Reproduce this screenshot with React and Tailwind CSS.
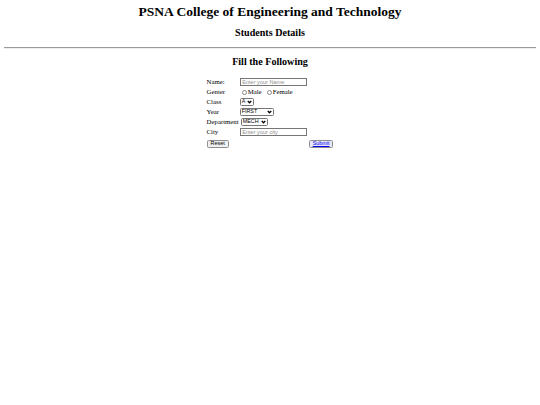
import React from 'react'

const serif = { fontFamily: '"Liberation Serif", "Times New Roman", serif' }

const Chevron = () => (
  <svg className="w-[5px] h-[4px] shrink-0" viewBox="0 0 10 8" fill="none" stroke="currentColor" strokeWidth={2.6}>
    <path d="M1.5 2l3.5 3.5L8.5 2" />
  </svg>
)

const FakeSelect = ({ value, width }) => (
  <div
    className={`flex items-center justify-between gap-[1px] h-[8px] px-[1px] border border-[#767676] rounded-[1.5px] bg-white text-[5.4px] text-black font-['Liberation_Sans',Arial,sans-serif] leading-none ${width}`}
  >
    <span>{value}</span>
    <Chevron />
  </div>
)

const TextBox = ({ placeholder }) => (
  <input
    type="text"
    placeholder={placeholder}
    className="w-[67px] h-[8px] px-[1.5px] border border-[#767676] bg-white text-[5.6px] leading-none font-['Liberation_Sans',Arial,sans-serif] placeholder:text-[#8f8f8f] outline-none"
  />
)

const Radio = ({ label }) => (
  <label className="flex items-center gap-[1px]">
    <span className="w-[5px] h-[5px] rounded-full border border-[#8a8a8a] bg-white" />
    <span>{label}</span>
  </label>
)

export default function App() {
  return (
    <div className="w-[540px] h-[405px] bg-white text-[#000000]" style={serif}>
      <div className="px-[4px]">
        <h1 className="pt-[4px] text-center text-[13.5px] font-bold leading-[16px]">
          PSNA College of Engineering and Technology
        </h1>
        <h2 className="mt-[7px] text-center text-[10.1px] font-bold leading-[12px]">Students Details</h2>
        <div className="mt-[8px] h-[2px] border-t border-[#9a9a9a] border-b border-b-[#eeeeee]" />
        <h2 className="mt-[7px] text-center text-[10.1px] font-bold leading-[12px]">Fill the Following</h2>

        <div className="mt-[9px] flex justify-center">
          <div className="grid grid-cols-[auto_auto_auto] gap-x-[1px] text-[6.8px] leading-[10px] text-black">
            <div className="w-[32px]">Name:</div>
            <div className="flex items-center"><TextBox placeholder="Enter your Name" /></div>
            <div />

            <div>Genter</div>
            <div className="flex items-center gap-[5px] pl-[2px]">
              <Radio label="Male" />
              <Radio label="Female" />
            </div>
            <div />

            <div>Class</div>
            <div className="flex items-center"><FakeSelect value="A" width="w-[14px]" /></div>
            <div />

            <div>Year</div>
            <div className="flex items-center"><FakeSelect value="FIRST" width="w-[34px]" /></div>
            <div />

            <div>Department</div>
            <div className="flex items-center pl-[1px]"><FakeSelect value="MECH" width="w-[27px]" /></div>
            <div />

            <div>City</div>
            <div className="flex items-center"><TextBox placeholder="Enter your city" /></div>
            <div />

            <div className="flex items-center pt-[3px]">
              <button className="h-[8px] px-[3px] border border-[#8f8f8f] rounded-[1.5px] bg-[#efefef] text-[5.4px] leading-none text-black font-['Liberation_Sans',Arial,sans-serif]">
                Reset
              </button>
            </div>
            <div />
            <div className="flex items-center pt-[3px] pl-[1px]">
              <button className="h-[8px] px-[3px] border border-[#8f8f8f] rounded-[1.5px] bg-[#e6e6f7] text-[5.4px] leading-none text-[#0000ee] underline font-['Liberation_Sans',Arial,sans-serif]">
                Submit
              </button>
            </div>
          </div>
        </div>
      </div>
    </div>
  )
}
